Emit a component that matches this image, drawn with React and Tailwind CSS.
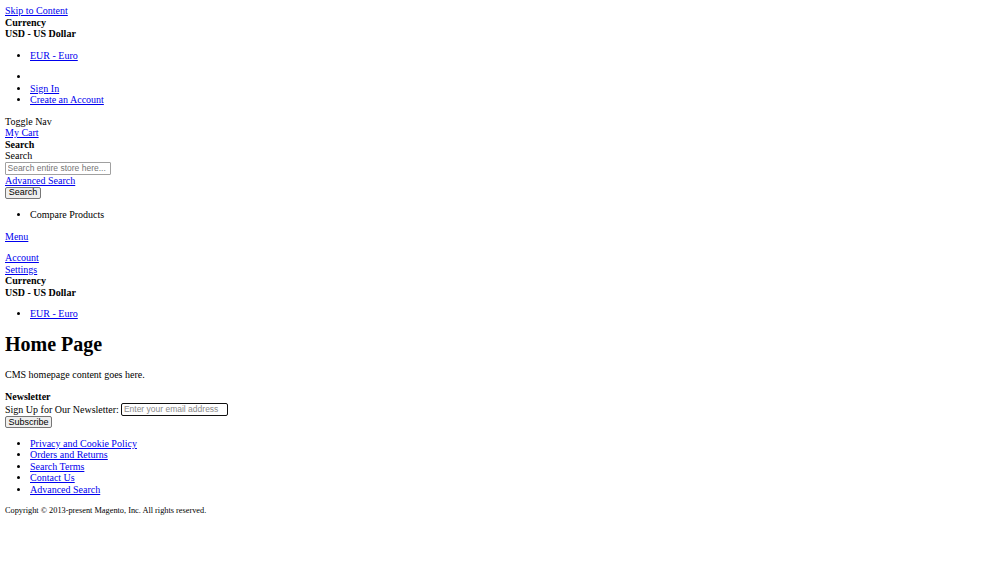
const links = [
  'Privacy and Cookie Policy',
  'Orders and Returns',
  'Search Terms',
  'Contact Us',
  'Advanced Search'
];

function A({ children }) {
  return (
    <a href="#" className="text-[#0000ee] underline">
      {children}
    </a>
  );
}

function CurrencyBlock() {
  return (
    <div>
      <strong className="block font-bold">Currency</strong>
      <strong className="block font-bold">USD - US Dollar</strong>
      <ul className="list-disc pl-[25px] my-[10px]">
        <li><A>EUR - Euro</A></li>
      </ul>
    </div>
  );
}

export default function App() {
  return (
    <div className="min-h-screen bg-white text-black p-[5px] font-['Liberation_Serif',serif] text-[10px] leading-[11.5px]">

      {/* HEADER */}

      <div><A>Skip to Content</A></div>

      <CurrencyBlock />

      <ul className="list-disc pl-[25px] my-[10px]">
        <li className="h-[11.5px]"></li>
        <li><A>Sign In</A></li>
        <li><A>Create an Account</A></li>
      </ul>

      <div>Toggle Nav</div>
      <div><A>My Cart</A></div>

      <div className="font-bold">Search</div>
      <div>Search</div>
      <input
        type="text"
        placeholder="Search entire store here..."
        className="block w-[106px] h-[13px] border border-[#a0a0a0] rounded-[1px] px-[1.5px] font-['Liberation_Sans',sans-serif] text-[8.5px] placeholder:text-[#757575]"
      />
      <div className="mt-[0.5px]"><A>Advanced Search</A></div>
      <button className="block w-[36px] h-[12.5px] bg-[#efefef] border border-[#767676] rounded-[2px] font-['Liberation_Sans',sans-serif] text-[9px] leading-none">
        Search
      </button>

      <ul className="list-disc pl-[25px] my-[10px]">
        <li>Compare Products</li>
      </ul>

      {/* NAV */}

      <div className="mb-[10px]"><A>Menu</A></div>
      <div><A>Account</A></div>
      <div><A>Settings</A></div>

      <CurrencyBlock />

      {/* CONTENT */}

      <h1 className="text-[20px] leading-[23px] font-bold mt-[13.4px] mb-[13.4px]">
        Home Page
      </h1>
      <p className="mb-[10px]">CMS homepage content goes here.</p>

      {/* FOOTER */}

      <div className="font-bold">Newsletter</div>
      <div className="flex items-center h-[14px]">
        <span>Sign Up for Our Newsletter:</span>
        <input
          type="email"
          placeholder="Enter your email address"
          className="ml-[2.5px] w-[107px] h-[13px] border-[1.5px] border-[#101010] rounded-[2px] px-[1.5px] font-['Liberation_Sans',sans-serif] text-[8.5px] placeholder:text-[#8a8a8a]"
        />
      </div>
      <button className="block w-[47px] h-[12px] bg-[#efefef] border border-[#767676] rounded-[2px] font-['Liberation_Sans',sans-serif] text-[9px] leading-none">
        Subscribe
      </button>

      <ul className="list-disc pl-[25px] mt-[9.5px] mb-[10px]">
        {links.map(link => (
          <li key={link}><A>{link}</A></li>
        ))}
      </ul>

      <small className="block text-[8.3px] leading-[11.5px]">
        Copyright © 2013-present Magento, Inc. All rights reserved.
      </small>

    </div>
  );
}
